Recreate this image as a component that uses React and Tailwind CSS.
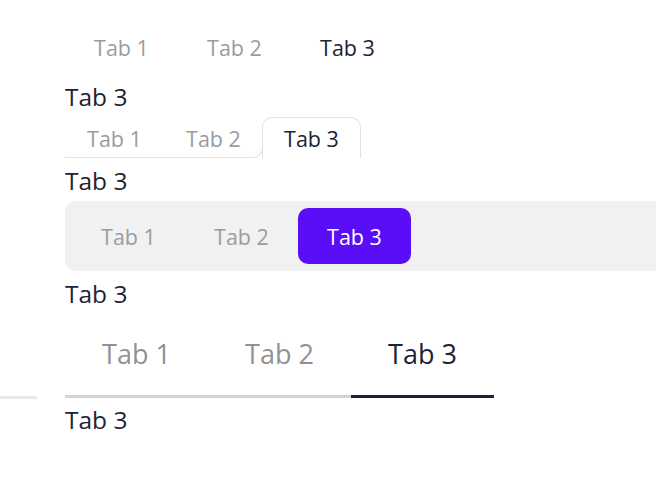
export default function App() {
  const font = { fontFamily: '"Open Sans", "Noto Sans", sans-serif' };
  return (
    <div className="w-[656px] h-[484px] overflow-hidden bg-white pl-[65px] text-[#1e2333]" style={font}>
      {/* Section 1: plain tabs */}
      <div className="mt-[28px] flex h-[40px]">
        <div className="flex w-[113px] items-center justify-center pt-[1px] text-[21.5px] text-[#9a9ca3]">Tab 1</div>
        <div className="flex w-[113px] items-center justify-center pt-[1px] text-[21.5px] text-[#9a9ca3]">Tab 2</div>
        <div className="flex w-[113px] items-center justify-center pt-[1px] text-[21.5px] text-[#1e2333]">Tab 3</div>
      </div>
      <div className="mt-[12px] h-[34px] text-[24.5px] leading-[34px]">Tab 3</div>

      {/* Section 2: folder tabs */}
      <div className="mt-[3px] flex h-[41px]">
        <div className="flex w-[198px] flex-col">
          <div className="flex h-[31px]">
            <div className="flex h-[44px] w-[99px] items-center justify-center text-[21.5px] text-[#9a9ca3]">Tab 1</div>
            <div className="flex h-[44px] w-[99px] items-center justify-center text-[21.5px] text-[#9a9ca3]">Tab 2</div>
          </div>
          <div className="h-[10px] rounded-br-[10px] border-r border-b border-[#e2e2e2]"></div>
        </div>
        <div className="-ml-px flex w-[99px] items-center justify-center rounded-t-[10px] border-t border-r border-l border-[#e2e2e2] bg-white pt-[2px] text-[21.5px] text-[#1e2333]">
          Tab 3
        </div>
      </div>
      <div className="mt-[6px] h-[34px] text-[24.5px] leading-[34px]">Tab 3</div>

      {/* Section 3: pill tabs */}
      <div className="mt-[3px] flex h-[70px] w-[640px] items-center rounded-[10px] bg-[#f1f1f1] px-[7px]">
        <div className="flex h-[56px] w-[113px] items-center justify-center pt-[3px] text-[21.5px] text-[#9a9ca3]">Tab 1</div>
        <div className="flex h-[56px] w-[113px] items-center justify-center pt-[3px] text-[21.5px] text-[#9a9ca3]">Tab 2</div>
        <div className="flex h-[56px] w-[113px] items-center justify-center rounded-[10px] bg-[#5a0ef7] pt-[3px] text-[21.5px] text-white">Tab 3</div>
      </div>
      <div className="mt-[6px] h-[34px] text-[24.5px] leading-[34px]">Tab 3</div>

      {/* Section 4: underline tabs */}
      <div className="mt-[3px] -ml-[65px] flex items-end">
        <div className="mb-[-1px] h-[3px] w-[37px] bg-[#e9e9ea]"></div>
        <div className="w-[28px]"></div>
        <div className="flex h-[84px] w-[143px] items-center justify-center border-b-[3px] border-[#d4d4d6] text-[27px] text-[#8f9198]">Tab 1</div>
        <div className="flex h-[84px] w-[143px] items-center justify-center border-b-[3px] border-[#d4d4d6] text-[27px] text-[#8f9198]">Tab 2</div>
        <div className="flex h-[84px] w-[143px] items-center justify-center border-b-[3px] border-[#1e2333] text-[27px] text-[#1e2333]">Tab 3</div>
      </div>
      <div className="mt-[5px] h-[34px] text-[24.5px] leading-[34px]">Tab 3</div>
    </div>
  );
}
